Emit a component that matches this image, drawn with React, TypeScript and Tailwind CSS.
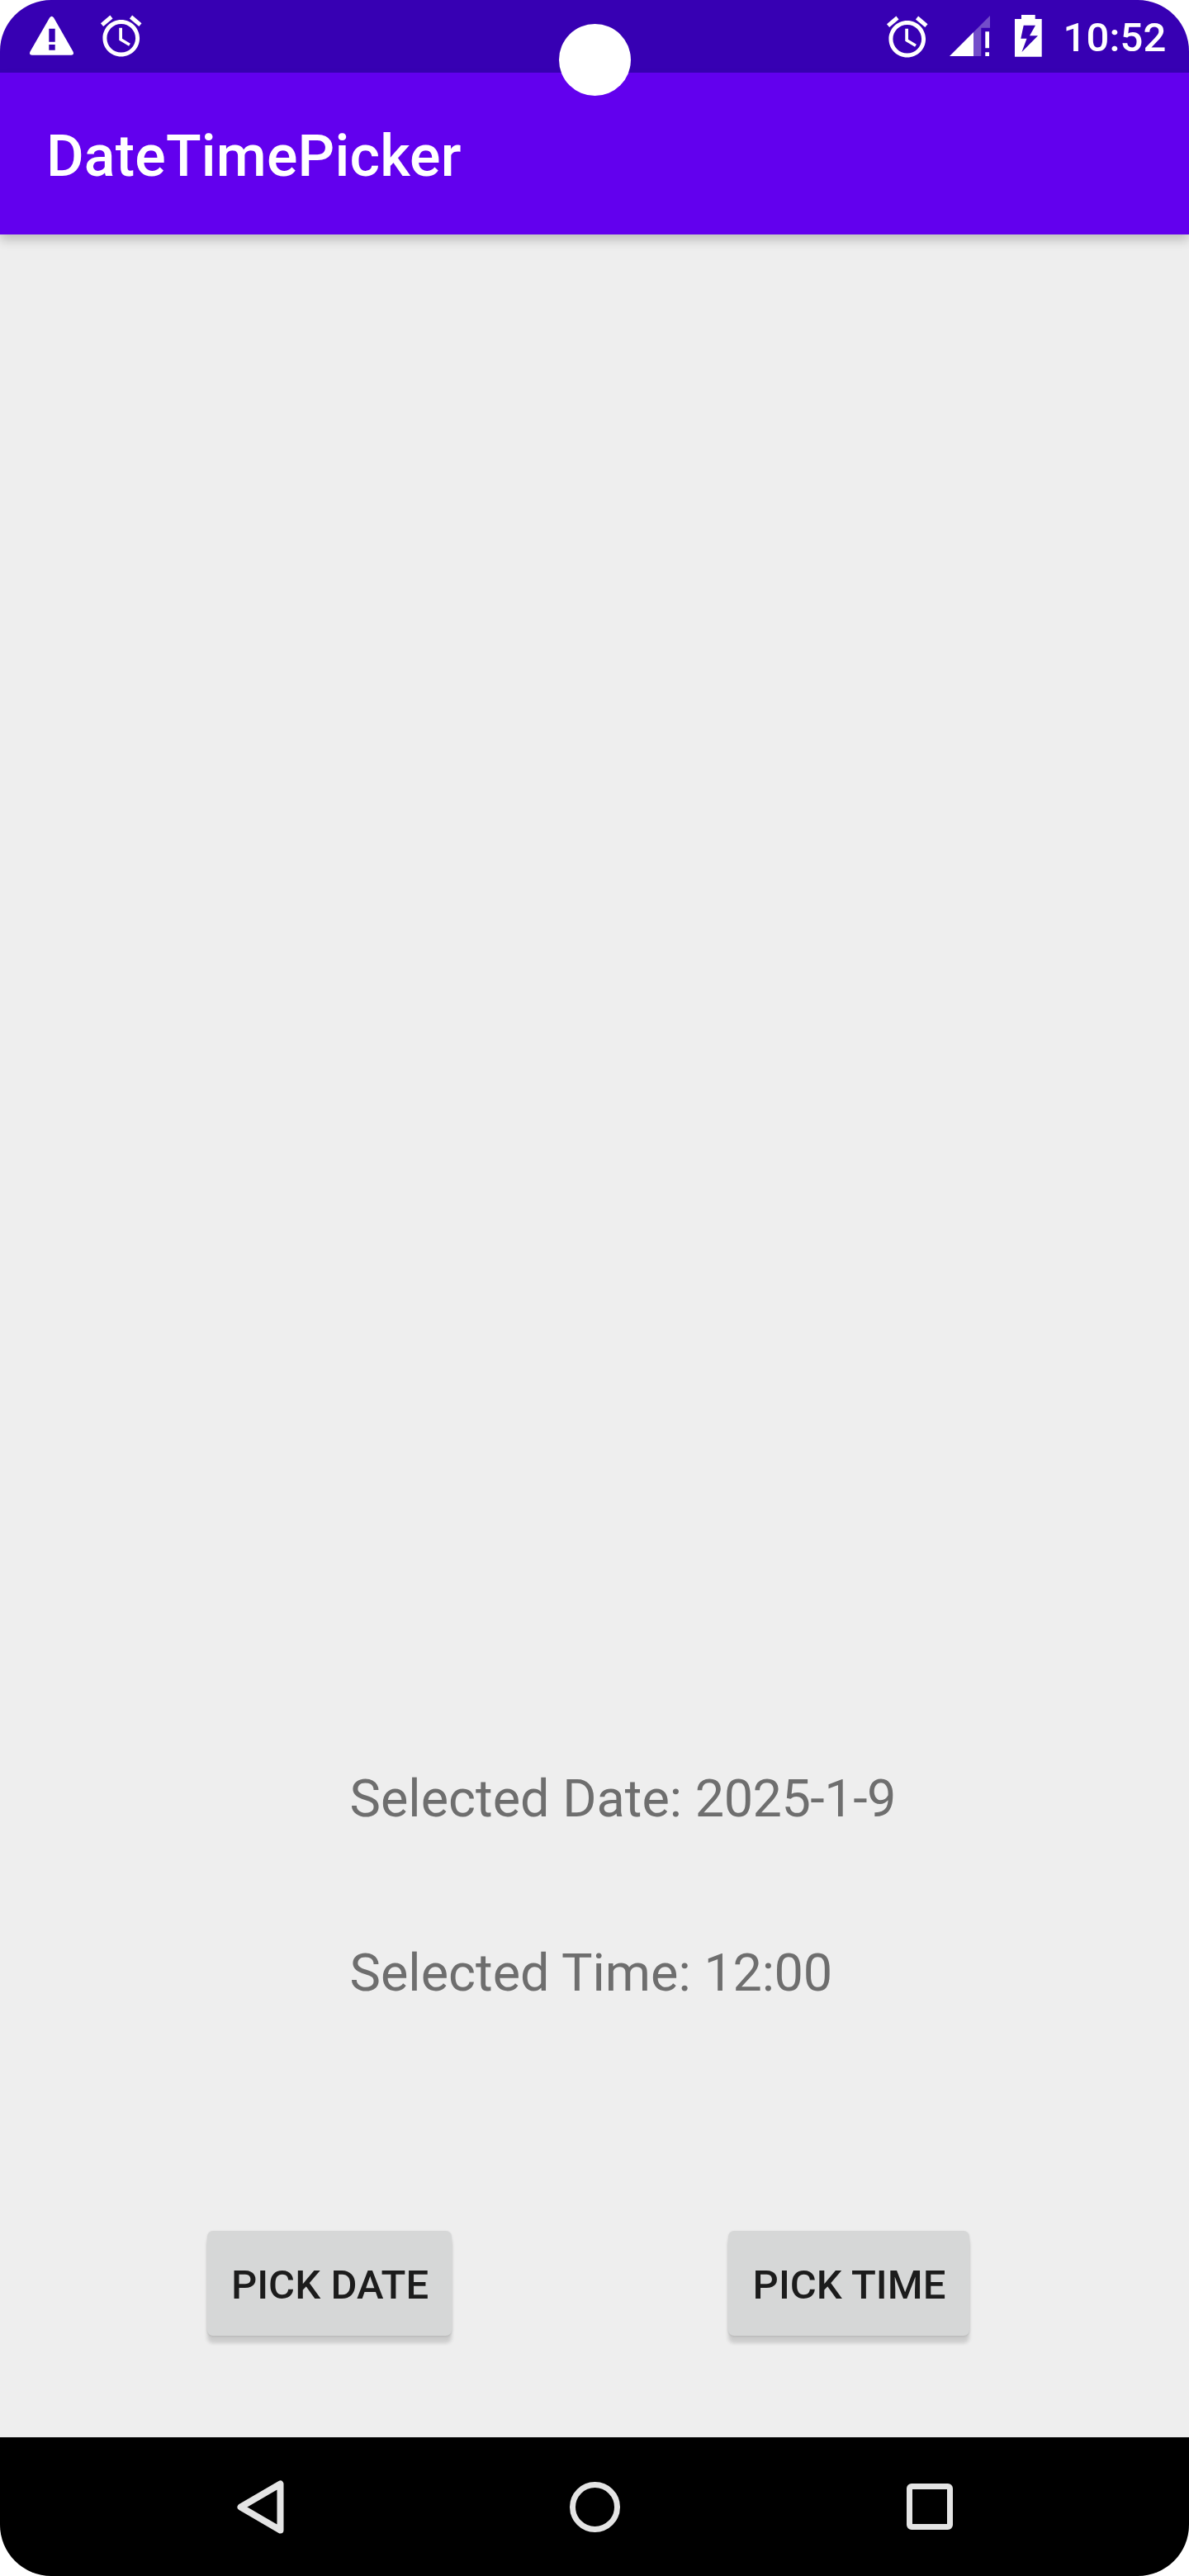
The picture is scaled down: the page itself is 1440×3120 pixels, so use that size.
function AlarmIcon({ className }: { className: string }) {
  return (
    <svg viewBox="0 0 24 24" className={`h-[59.5px] w-[59.5px] shrink-0 ${className}`} fill="white">
      <path d="M22 5.72l-4.6-3.86-1.29 1.53 4.6 3.86L22 5.72zM7.88 3.39L6.6 1.86 2 5.71l1.29 1.53 4.59-3.85zM12.5 8H11v6l4.75 2.85.75-1.23-4-2.37V8zM12 4c-4.97 0-9 4.03-9 9s4.02 9 9 9c4.97 0 9-4.03 9-9s-4.03-9-9-9zm0 16c-3.87 0-7-3.13-7-7s3.13-7 7-7 7 3.13 7 7-3.13 7-7 7z" />
    </svg>
  );
}

function WarningIcon() {
  return (
    <svg viewBox="0 0 53 48" className="mt-[19px] ml-9 h-12 w-[53px] shrink-0" fill="white">
      <path
        fillRule="evenodd"
        d="M24.2 2.2Q26.6-.8 29 2.2L52.5 43.6Q54.2 47.5 50.3 47.7H2.7Q-1.2 47.5.5 43.6ZM23.3 15.7V31.7H30.7V15.7ZM23.3 35V41.7H30.7V35Z"
      />
    </svg>
  );
}

function SignalIcon() {
  return (
    <svg viewBox="0 0 49 49" className="mt-[19px] ml-[21.5px] h-[49px] w-[49px] shrink-0" fill="white">
      <path d="M0 49H29V20Z" />
      <path d="M29 20L49 0V14.7H38.3V49H29Z" fillOpacity="0.3" />
      <path d="M43.3 19.3H48V39.3H43.3ZM43.3 44.3H48V49H43.3Z" />
    </svg>
  );
}

function BatteryIcon() {
  return (
    <svg viewBox="0 0 33 51" className="mt-[18px] ml-[30px] h-[51px] w-[33px] shrink-0" fill="white">
      <path
        fillRule="evenodd"
        d="M8 0H24.7V5H32.7V50.7H0V5H8ZM10.7 12.7L7.3 28.7H14.5L8.5 45L28 25.3H18L25 12.7Z"
      />
    </svg>
  );
}

function PickButton({ label, className }: { label: string; className: string }) {
  return (
    <button
      className={`flex h-[127px] items-center justify-center rounded-[7px] bg-[#d6d7d7] pt-[5px] pl-px text-[49px] leading-[58px] font-medium tracking-[0.05px] whitespace-nowrap text-[#1c1c1c] shadow-[0_9px_4px_rgba(0,0,0,0.14),0_1px_3px_rgba(0,0,0,0.12)] ${className}`}
    >
      {label}
    </button>
  );
}

export default function App() {
  return (
    <div className="h-[3120px] w-[1440px] bg-white font-['Roboto',sans-serif]">
      <div className="relative flex h-full flex-col overflow-hidden rounded-[62px] bg-[#eeeeee]">
        <div className="flex h-[88px] shrink-0 items-start bg-[#3700b3]">
          <WarningIcon />
          <AlarmIcon className="mt-[14px] ml-[28px]" />
          <div className="flex-1" />
          <AlarmIcon className="mt-[14.5px]" />
          <SignalIcon />
          <BatteryIcon />
          <span className="mt-[17px] ml-[25.5px] w-[152.5px] text-[49px] leading-[58px] font-medium tracking-[0.15px] text-white">
            10:52
          </span>
        </div>
        <header className="flex h-[196px] shrink-0 items-center bg-[#6200ee] pt-[6px] pl-14 shadow-[0_7px_12px_rgba(0,0,0,0.2)]">
          <h1 className="text-[70px] leading-[82px] font-medium tracking-[0.17px] text-white">DateTimePicker</h1>
        </header>
        <main className="flex flex-1 flex-col">
          <p className="mt-[1858px] ml-[423.5px] text-[63px] leading-[74px] text-[#6e6e6e]">
            Selected Date: <span className="tracking-[-0.5px]">2025-1-9</span>
          </p>
          <p className="mt-[137px] ml-[423.5px] text-[63px] leading-[74px] text-[#6e6e6e]">
            Selected Time: <span className="tracking-[-0.3px]">12:00</span>
          </p>
          <div className="mt-[275px] flex pl-[251px]">
            <PickButton label="PICK DATE" className="w-[296px]" />
            <PickButton label="PICK TIME" className="ml-[335px] w-[292px]" />
          </div>
        </main>
        <nav className="flex h-[168px] shrink-0 items-center bg-black">
          <svg viewBox="0 0 57 65" className="ml-[287px] h-[65px] w-[57px]" fill="none">
            <path
              d="M4.5 32.5L52.5 4.5V60.5Z"
              stroke="#e4e4e4"
              strokeWidth="8"
              strokeLinejoin="round"
            />
          </svg>
          <div className="ml-[345.5px] h-[61px] w-[61px] rounded-full border-[7px] border-[#e4e4e4]" />
          <div className="ml-[347px] h-14 w-14 rounded-[6px] border-[7px] border-[#e4e4e4]">
            <div className="h-full w-full bg-black" />
          </div>
        </nav>
        <div className="absolute top-[29px] left-[677px] h-[87px] w-[87px] rounded-full bg-white" />
      </div>
    </div>
  );
}
